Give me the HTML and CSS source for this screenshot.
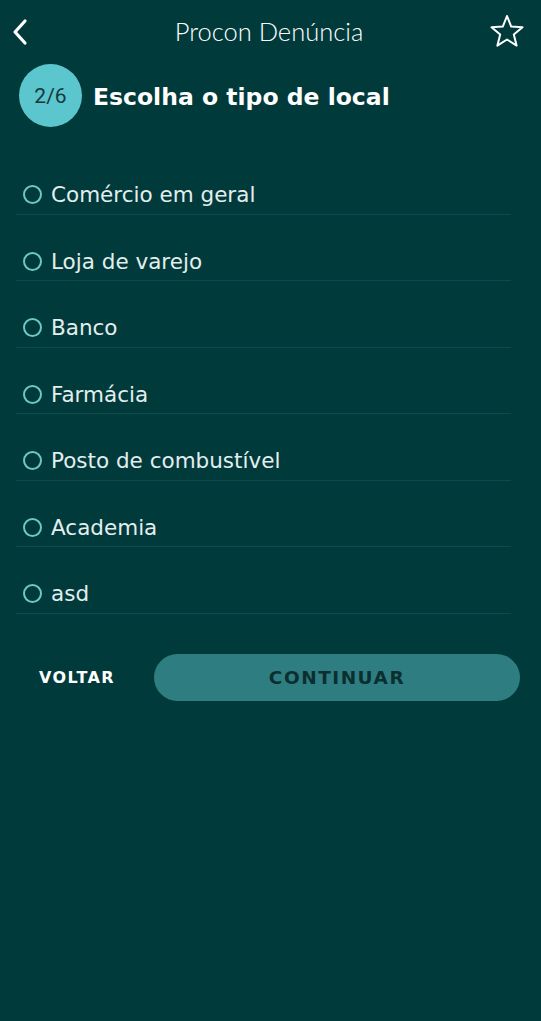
FILE: index.html
```html
<!DOCTYPE html>
<html lang="pt-BR">
<head>
    <meta charset="UTF-8" />
    <meta name="viewport" content="width=device-width, initial-scale=1.0" />
    <title>Procon Denúncia</title>
    <link rel="stylesheet" href="styles.css">
</head>
<body>
    <header class="topbar">
        <button class="icon-btn back-btn" aria-label="Voltar">
            <svg width="18" height="28" viewBox="0 0 18 28" fill="none">
                <path d="M14 3 L4 14 L14 25" stroke="#ffffff" stroke-width="3.2" stroke-linecap="round" stroke-linejoin="round"/>
            </svg>
        </button>
        <h1 class="app-title">Procon Denúncia</h1>
        <button class="icon-btn star-btn" aria-label="Favoritar">
            <svg width="36" height="34" viewBox="0 0 36 34" fill="none">
                <path d="M18 2 L22.2 12.6 L33.5 13.3 L24.8 20.6 L27.6 31.6 L18 25.5 L8.4 31.6 L11.2 20.6 L2.5 13.3 L13.8 12.6 Z" stroke="#ffffff" stroke-width="2" stroke-linejoin="round"/>
            </svg>
        </button>
    </header>

    <main class="content">
        <div class="step">
            <div class="step-badge">2/6</div>
            <h2 class="step-title">Escolha o tipo de local</h2>
        </div>

        <ul class="options">
            <li class="option"><span class="radio"></span>Comércio em geral</li>
            <li class="option"><span class="radio"></span>Loja de varejo</li>
            <li class="option"><span class="radio"></span>Banco</li>
            <li class="option"><span class="radio"></span>Farmácia</li>
            <li class="option"><span class="radio"></span>Posto de combustível</li>
            <li class="option"><span class="radio"></span>Academia</li>
            <li class="option"><span class="radio"></span>asd</li>
        </ul>

        <div class="actions">
            <button class="btn-back">VOLTAR</button>
            <button class="btn-next">CONTINUAR</button>
        </div>
    </main>
</body>
</html>
```

FILE: styles.css
```css
:root {
    --bg-color: #013a3b;
    --line-color: #0d4c4d;
    --badge-color: #5cc6cf;
    --radio-color: #6fc7c8;
    --text-color: #e3eeee;
    --button-color: #2e7e81;
    --button-text: #0b2e30;
}

html, body {
    margin: 0;
    padding: 0;
}

body {
    background-color: var(--bg-color);
    font-family: 'DejaVu Sans', 'Open Sans', sans-serif;
    color: var(--text-color);
    width: 541px;
    height: 1021px;
    overflow: hidden;
}

.topbar {
    height: 64px;
    display: flex;
    align-items: center;
    padding: 0 16px 0 11px;
}

.icon-btn {
    background: none;
    border: none;
    padding: 0;
    display: flex;
    cursor: pointer;
}

.app-title {
    flex: 1;
    margin: -2px 0 0 0;
    text-align: center;
    font-family: 'Lato', sans-serif;
    font-weight: 300;
    font-size: 25.5px;
    color: #ffffff;
    padding-left: 20px;
}

.star-btn {
    margin-top: -2px;
}

.step {
    display: flex;
    align-items: center;
    gap: 11px;
    padding-left: 19px;
}

.step-badge {
    width: 63px;
    height: 63px;
    border-radius: 50%;
    background-color: var(--badge-color);
    color: #14393b;
    font-family: 'Roboto', sans-serif;
    font-size: 21px;
    display: flex;
    align-items: center;
    justify-content: center;
}

.step-title {
    margin: 2px 0 0 0;
    font-family: 'DejaVu Sans', sans-serif;
    font-weight: 700;
    font-size: 23.5px;
    color: #ffffff;
}

.options {
    list-style: none;
    margin: 21px 30px 0 16px;
    padding: 0;
}

.option {
    display: flex;
    align-items: center;
    gap: 9px;
    height: 28px;
    padding: 32.5px 0 5px 7px;
    border-bottom: 1px solid var(--line-color);
    font-size: 21.5px;
}

.radio {
    width: 15px;
    height: 15px;
    border: 2px solid var(--radio-color);
    border-radius: 50%;
    flex-shrink: 0;
}

.actions {
    display: flex;
    align-items: center;
    margin: 40px 21px 0 16px;
}

.btn-back {
    background: none;
    border: none;
    color: #ffffff;
    font-family: 'DejaVu Sans', sans-serif;
    font-weight: 700;
    font-size: 16px;
    letter-spacing: 1.4px;
    padding: 0 0 0 23px;
    width: 138px;
    text-align: left;
}

.btn-next {
    flex: 1;
    height: 47px;
    border: none;
    border-radius: 24px;
    background-color: var(--button-color);
    color: var(--button-text);
    font-family: 'DejaVu Sans', sans-serif;
    font-weight: 700;
    font-size: 18.5px;
    letter-spacing: 1.5px;
}
```
